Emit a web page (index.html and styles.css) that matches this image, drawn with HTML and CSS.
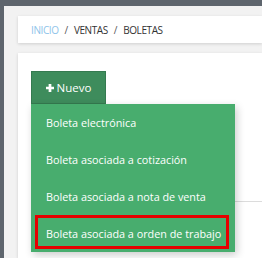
FILE: index.html
```html
<!DOCTYPE html>
<html lang="es">
<head>
    <meta charset="UTF-8">
    <title>Boletas</title>
    <link rel="stylesheet" href="styles.css">
</head>
<body>
    <div class="topbar"></div>
    <div class="layout">
        <div class="sidebar"></div>
        <div class="main">
            <div class="card breadcrumb">
                <a class="crumb-link">INICIO</a>
                <span class="sep">/</span>
                <span>VENTAS</span>
                <span class="sep">/</span>
                <span>BOLETAS</span>
            </div>
            <div class="card content">
                <div class="btn-group">
                    <button class="btn-new">
                        <svg width="8" height="8" viewBox="0 0 10 10"><path d="M3.3 0h3.4v3.3H10v3.4H6.7V10H3.3V6.7H0V3.3h3.3z" fill="#fff"/></svg>
                        Nuevo
                    </button>
                    <ul class="dropdown">
                        <li>Boleta electrónica</li>
                        <li>Boleta asociada a cotización</li>
                        <li>Boleta asociada a nota de venta</li>
                        <li class="marked">Boleta asociada a orden de trabajo</li>
                    </ul>
                </div>
                <div class="table-line"></div>
            </div>
        </div>
    </div>
</body>
</html>
```

FILE: styles.css
```css
body {
    margin: 0;
    font-family: "Open Sans", sans-serif;
    background-color: #f2f2f2;
    height: 258px;
    overflow: hidden;
}

.topbar {
    height: 6px;
    background-color: #5e656d;
}

.layout {
    display: flex;
    height: 252px;
}

.sidebar {
    width: 4px;
    background-color: #5e656d;
}

.main {
    flex: 1;
    padding: 10px 0 0 14px;
}

.card {
    background-color: #fff;
    box-shadow: 0 1px 3px rgba(0, 0, 0, 0.15);
}

.breadcrumb {
    height: 27px;
    display: flex;
    align-items: center;
    gap: 6px;
    padding-left: 13px;
    font-size: 10px;
    letter-spacing: -0.4px;
    color: #333;
}

.crumb-link {
    color: #8ec4ea;
}

.sep {
    color: #555;
}

.content {
    margin-top: 10px;
    padding: 18px 0 0 13px;
    height: 187px;
}

.btn-group {
    position: relative;
}

.btn-new {
    width: 75px;
    height: 33px;
    display: flex;
    align-items: center;
    justify-content: center;
    gap: 3px;
    padding: 0;
    border: 1px solid #357a50;
    background-color: #3e8c5c;
    color: #fff;
    font-family: "Open Sans", sans-serif;
    font-size: 11.5px;
}

.dropdown {
    position: absolute;
    top: 33px;
    left: 0;
    width: 204px;
    margin: 0;
    padding: 0;
    list-style: none;
    background-color: #48ad6e;
    box-shadow: 2px 3px 8px rgba(0, 0, 0, 0.2);
}

.dropdown li {
    height: 37px;
    line-height: 37px;
    padding-left: 15px;
    color: #fff;
    font-size: 10.8px;
}

.dropdown li.marked {
    position: relative;
}

.dropdown li.marked::after {
    content: "";
    position: absolute;
    left: 4px;
    top: 0;
    width: 188px;
    height: 28px;
    border: 3px solid #e60000;
}

.table-line {
    margin-top: 97px;
    border-top: 1px solid #dcdcdc;
}
```
